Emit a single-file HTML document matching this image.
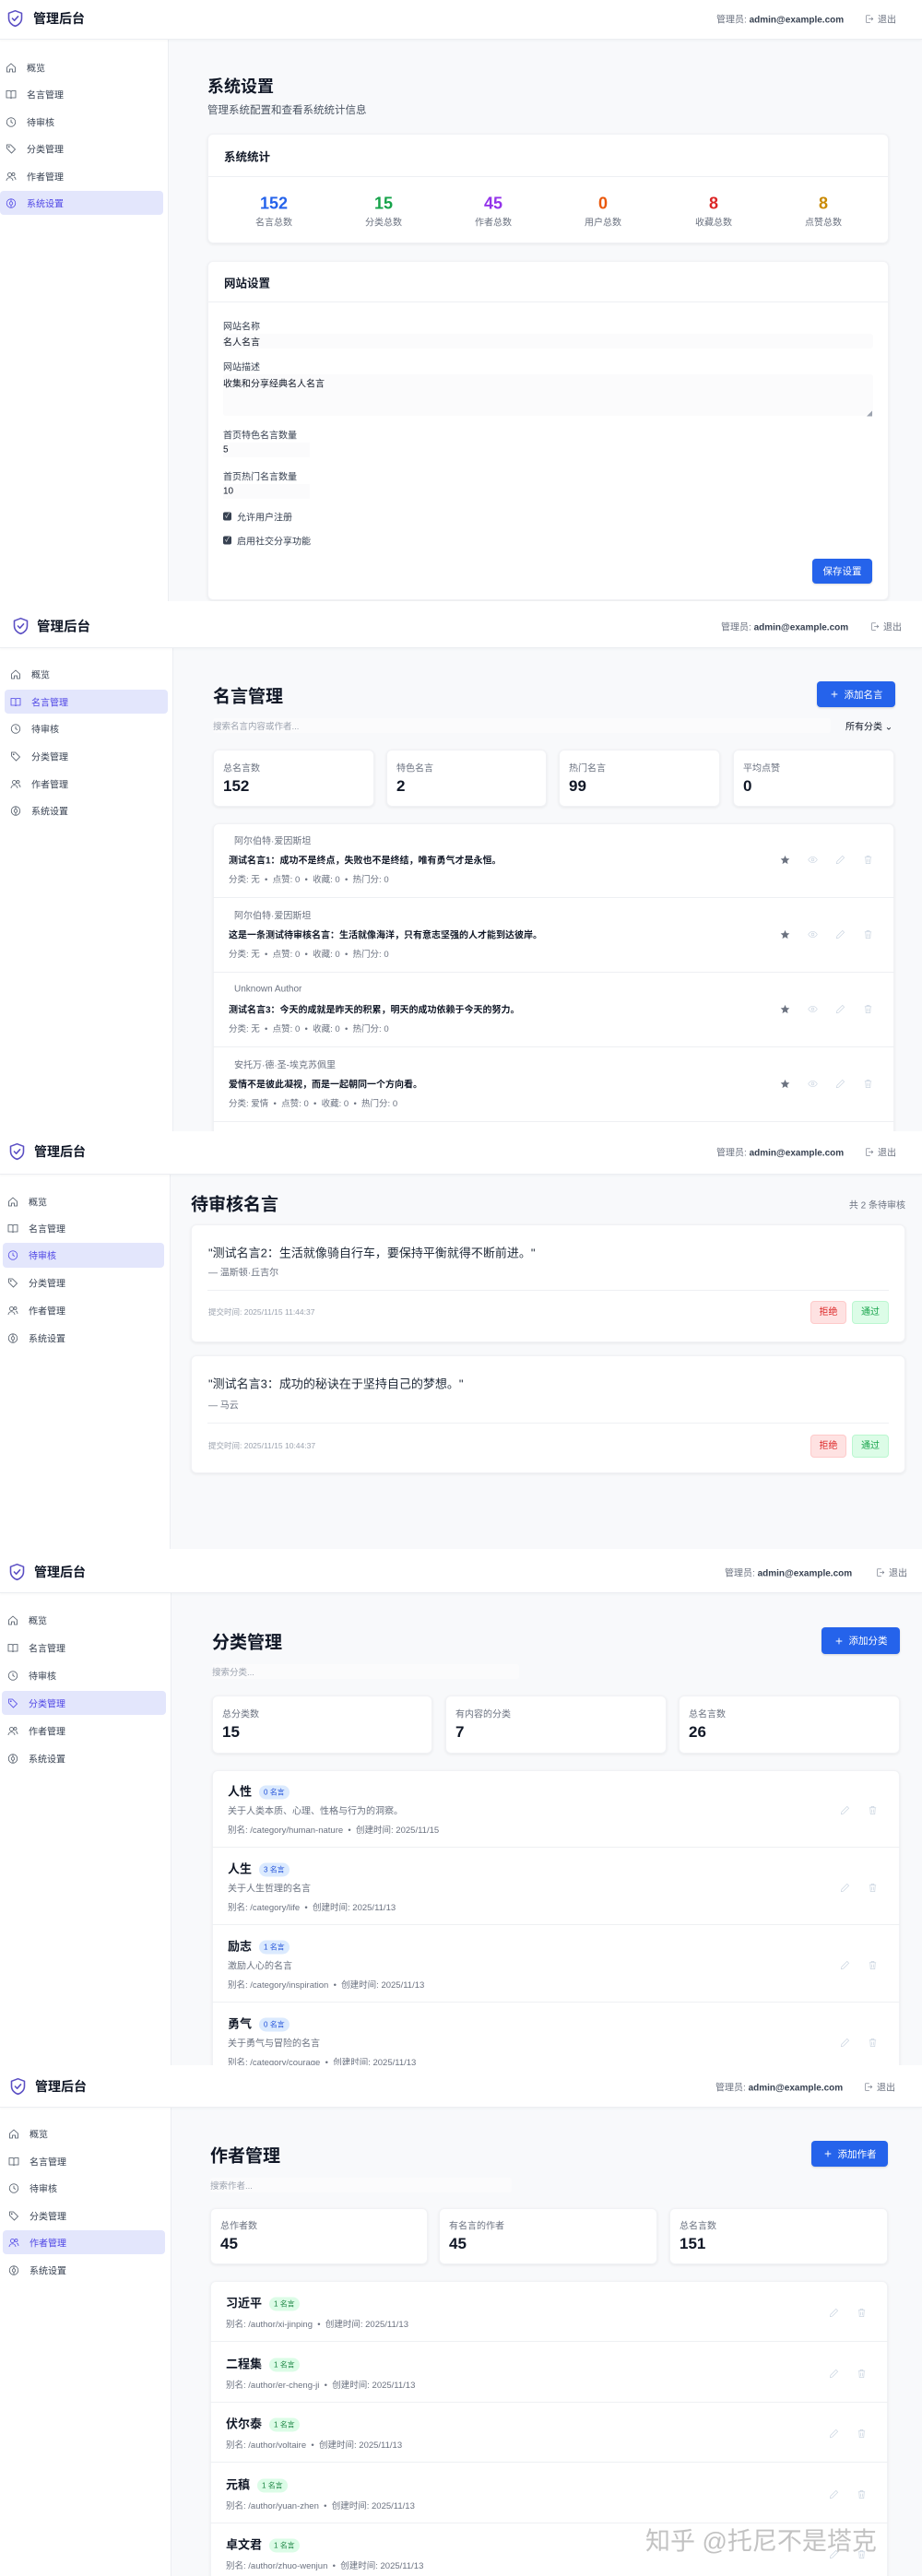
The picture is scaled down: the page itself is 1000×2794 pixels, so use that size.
<!DOCTYPE html>
<html><head><meta charset="utf-8">
<style>
*{box-sizing:border-box}
body{margin:0;width:1000px;height:2794px;position:relative;font-family:"Liberation Sans","Noto Sans CJK SC",sans-serif;background:#f8f9fb;color:#111827;overflow:hidden}
.p{position:absolute;left:0;width:1000px;overflow:hidden;background:#f8f9fb}
.a{position:absolute;white-space:nowrap}
.c{transform:translateY(-50%)}
.side{position:absolute;left:0;top:0;bottom:0;background:#fff;border-right:1px solid #eceef2}
.hdr{position:absolute;top:0;left:0;right:0;background:#fff;border-bottom:1px solid #eceef2;box-shadow:0 1px 3px rgba(0,0,0,.04)}
.logo{font-size:14px;font-weight:bold;color:#111827}
.nav{font-size:10px;color:#374151;display:flex;align-items:center}
.nav svg{width:12px;height:12px;margin-right:11px;stroke:#4b5563;fill:none;stroke-width:1.6}
.act{position:absolute;background:#e3e6fc;border-radius:4px}
.nav.on{color:#4f46e5}.nav.on svg{stroke:#4f46e5}
.usr{font-size:10px;color:#6b7280}.usr b{color:#374151;font-weight:600}
.out{font-size:10px;color:#6b7280;display:flex;align-items:center}
.out svg{width:10px;height:10px;stroke:#6b7280;fill:none;stroke-width:1.5;margin-right:4px}
.card{position:absolute;background:#fff;border-radius:6px;box-shadow:0 1px 3px rgba(0,0,0,.07);border:1px solid #f1f2f5}
.h1{font-size:19px;font-weight:bold;color:#111827}
.btn{position:absolute;background:#2563eb;color:#fff;border-radius:4px;font-size:10.5px;display:flex;align-items:center;justify-content:center;box-shadow:0 1px 2px rgba(0,0,0,.15)}
.srch{position:absolute;background:#fbfbfc;border-radius:3px;font-size:9.5px;color:#9ca3af;padding-left:0;display:flex;align-items:center}
.sl{font-size:10px;color:#6b7280}
.sv{font-size:17px;font-weight:bold;color:#111827}
.g{color:#6b7280}
.ln{position:absolute;height:1px;background:#eef0f3}
.ic{position:absolute;width:11px;height:11px;fill:none;stroke:#cbd5e1;stroke-width:1.5}
.badge{display:inline-block;font-size:8px;padding:2px 5px;border-radius:8px;margin-left:8px;vertical-align:middle;font-weight:normal}
.bb{background:#dbeafe;color:#1d4ed8}.bg{background:#dcfce7;color:#15803d}
</style></head><body>
<svg width="0" height="0" style="position:absolute">
<defs>
<symbol id="shield" viewBox="0 0 24 24"><path d="M12 2.5l8 3v6c0 5-3.5 8.6-8 10-4.5-1.4-8-5-8-10v-6z" fill="none" stroke="#5b4fc4" stroke-width="1.8" stroke-linejoin="round"/><path d="M8.5 12l2.5 2.5 4.5-5" fill="none" stroke="#5b4fc4" stroke-width="1.8" stroke-linecap="round" stroke-linejoin="round"/></symbol>
<symbol id="home" viewBox="0 0 24 24"><path d="M3 11l9-8 9 8v10h-6v-6h-6v6H3z"/></symbol>
<symbol id="book" viewBox="0 0 24 24"><path d="M2 4h7a3 3 0 013 3v14a2 2 0 00-2-2H2zM22 4h-7a3 3 0 00-3 3v14a2 2 0 012-2h8z"/></symbol>
<symbol id="clock" viewBox="0 0 24 24"><circle cx="12" cy="12" r="9.5"/><path d="M12 6.5V12l4 2"/></symbol>
<symbol id="tag" viewBox="0 0 24 24"><path d="M3 3h8l10 10-8 8L3 11z"/><circle cx="7.5" cy="7.5" r="1"/></symbol>
<symbol id="users" viewBox="0 0 24 24"><circle cx="9" cy="8" r="4"/><path d="M2 21c0-4 3-6.5 7-6.5s7 2.5 7 6.5"/><circle cx="17" cy="7" r="3"/><path d="M18 13c2.5.5 4 2.5 4 6"/></symbol>
<symbol id="gear" viewBox="0 0 24 24"><circle cx="12" cy="12" r="9.5"/><circle cx="12" cy="12" r="3.5"/><path d="M12 2.5v6M12 15.5v6"/></symbol>
<symbol id="logout" viewBox="0 0 24 24"><path d="M14 3H4v18h10M10 12h11M17 8l4 4-4 4"/></symbol>
<symbol id="star" viewBox="0 0 24 24"><path d="M12 2l3 7 7.5.6-5.7 5 1.8 7.4L12 18l-6.6 4 1.8-7.4-5.7-5L9 9z" fill="#6b7280" stroke="none"/></symbol>
<symbol id="eye" viewBox="0 0 24 24"><path d="M1.5 12S5.5 5 12 5s10.5 7 10.5 7-4 7-10.5 7S1.5 12 1.5 12z"/><circle cx="12" cy="12" r="3"/></symbol>
<symbol id="pen" viewBox="0 0 24 24"><path d="M17 3l4 4L8 20l-5 1 1-5z"/></symbol>
<symbol id="trash" viewBox="0 0 24 24"><path d="M4 6h16M9 6V3h6v3M6 6l1 15h10l1-15M10 10v8M14 10v8"/></symbol>
<symbol id="plus" viewBox="0 0 24 24"><path d="M12 4v16M4 12h16" stroke="#fff" stroke-width="2.2" fill="none"/></symbol>
</defs></svg>

<!-- ================= PANEL 1 ================= -->
<div class="p" style="top:0;height:652px">
 <div class="side" style="width:183px"></div>
 <div class="hdr" style="height:43px"></div>
 <svg class="a" style="left:6px;top:9px;width:21px;height:22px"><use href="#shield"/></svg>
 <div class="a c logo" style="left:36px;top:20px">管理后台</div>
 <div class="a c usr" style="left:777px;top:20px">管理员: <b>admin@example.com</b></div>
 <div class="a c out" style="left:938px;top:20px"><svg><use href="#logout"/></svg>退出</div>
 <div class="act" style="left:0;top:207px;width:177px;height:26px"></div>
 <div class="a c nav" style="left:6px;top:73px"><svg><use href="#home"/></svg>概览</div>
 <div class="a c nav" style="left:6px;top:102px"><svg><use href="#book"/></svg>名言管理</div>
 <div class="a c nav" style="left:6px;top:132px"><svg><use href="#clock"/></svg>待审核</div>
 <div class="a c nav" style="left:6px;top:161px"><svg><use href="#tag"/></svg>分类管理</div>
 <div class="a c nav" style="left:6px;top:191px"><svg><use href="#users"/></svg>作者管理</div>
 <div class="a c nav on" style="left:6px;top:220px"><svg><use href="#gear"/></svg>系统设置</div>

 <div class="a c" style="left:225px;top:93px;font-size:18px;font-weight:bold">系统设置</div>
 <div class="a c" style="left:225px;top:119px;font-size:11.5px;color:#4b5563">管理系统配置和查看系统统计信息</div>

 <div class="card" style="left:225px;top:145px;width:739px;height:119px">
  <div class="a c" style="left:17px;top:23px;font-size:12.5px;font-weight:600">系统统计</div>
  <div class="ln" style="left:0;right:0;top:45px"></div>
 </div>
 <div class="a c" style="left:247px;width:100px;text-align:center;top:221px;font-size:18px;font-weight:bold;color:#2563eb">152</div>
 <div class="a c" style="left:366px;width:100px;text-align:center;top:221px;font-size:18px;font-weight:bold;color:#16a34a">15</div>
 <div class="a c" style="left:485px;width:100px;text-align:center;top:221px;font-size:18px;font-weight:bold;color:#9333ea">45</div>
 <div class="a c" style="left:604px;width:100px;text-align:center;top:221px;font-size:18px;font-weight:bold;color:#ea580c">0</div>
 <div class="a c" style="left:724px;width:100px;text-align:center;top:221px;font-size:18px;font-weight:bold;color:#dc2626">8</div>
 <div class="a c" style="left:843px;width:100px;text-align:center;top:221px;font-size:18px;font-weight:bold;color:#ca8a04">8</div>
 <div class="a c sl" style="left:247px;width:100px;text-align:center;top:240px">名言总数</div>
 <div class="a c sl" style="left:366px;width:100px;text-align:center;top:240px">分类总数</div>
 <div class="a c sl" style="left:485px;width:100px;text-align:center;top:240px">作者总数</div>
 <div class="a c sl" style="left:604px;width:100px;text-align:center;top:240px">用户总数</div>
 <div class="a c sl" style="left:724px;width:100px;text-align:center;top:240px">收藏总数</div>
 <div class="a c sl" style="left:843px;width:100px;text-align:center;top:240px">点赞总数</div>

 <div class="card" style="left:225px;top:283px;width:739px;height:368px">
  <div class="a c" style="left:17px;top:22px;font-size:12.5px;font-weight:600">网站设置</div>
  <div class="ln" style="left:0;right:0;top:43px"></div>
 </div>
 <div class="a" style="left:242px;top:362px;width:705px;height:16px;background:#fbfbfc;border-radius:3px"></div>
 <div class="a" style="left:242px;top:406px;width:705px;height:45px;background:#fbfbfc;border-radius:3px"></div>
 <div class="a" style="left:242px;top:480px;width:94px;height:16px;background:#fbfbfc"></div>
 <div class="a" style="left:242px;top:525px;width:94px;height:16px;background:#fbfbfc"></div>
 <div class="a" style="left:940px;top:444px;font-size:6px;color:#9ca3af">◢</div>
 <div class="a c" style="left:242px;top:353px;font-size:10px;color:#374151">网站名称</div>
 <div class="a c" style="left:242px;top:370px;font-size:10px;color:#111827">名人名言</div>
 <div class="a c" style="left:242px;top:397px;font-size:10px;color:#374151">网站描述</div>
 <div class="a c" style="left:242px;top:415px;font-size:10px;color:#111827">收集和分享经典名人名言</div>
 <div class="a c" style="left:242px;top:471px;font-size:10px;color:#374151">首页特色名言数量</div>
 <div class="a c" style="left:242px;top:488px;font-size:10px;color:#111827">5</div>
 <div class="a c" style="left:242px;top:516px;font-size:10px;color:#374151">首页热门名言数量</div>
 <div class="a c" style="left:242px;top:533px;font-size:10px;color:#111827">10</div>
 <div class="a c" style="left:242px;top:560px;font-size:10px;color:#374151;display:flex;align-items:center"><span style="display:inline-block;width:9px;height:9px;background:#374151;border-radius:2px;margin-right:6px;color:#fff;font-size:7px;line-height:9px;text-align:center">✓</span>允许用户注册</div>
 <div class="a c" style="left:242px;top:586px;font-size:10px;color:#374151;display:flex;align-items:center"><span style="display:inline-block;width:9px;height:9px;background:#374151;border-radius:2px;margin-right:6px;color:#fff;font-size:7px;line-height:9px;text-align:center">✓</span>启用社交分享功能</div>
 <div class="btn" style="left:881px;top:606px;width:65px;height:27px">保存设置</div>
</div>

<!-- ================= PANEL 2 ================= -->
<div class="p" style="top:652px;height:575px">
 <div class="side" style="width:188px"></div>
 <div class="hdr" style="height:51px"></div>
 <svg class="a" style="left:12px;top:16px;width:21px;height:22px"><use href="#shield"/></svg>
 <div class="a c logo" style="left:40px;top:27px;font-size:14.5px">管理后台</div>
 <div class="a c usr" style="left:782px;top:27px">管理员: <b>admin@example.com</b></div>
 <div class="a c out" style="left:944px;top:27px"><svg><use href="#logout"/></svg>退出</div>
 <div class="act" style="left:5px;top:96px;width:177px;height:26px"></div>
 <div class="a c nav" style="left:11px;top:79px"><svg><use href="#home"/></svg>概览</div>
 <div class="a c nav on" style="left:11px;top:109px"><svg><use href="#book"/></svg>名言管理</div>
 <div class="a c nav" style="left:11px;top:138px"><svg><use href="#clock"/></svg>待审核</div>
 <div class="a c nav" style="left:11px;top:168px"><svg><use href="#tag"/></svg>分类管理</div>
 <div class="a c nav" style="left:11px;top:198px"><svg><use href="#users"/></svg>作者管理</div>
 <div class="a c nav" style="left:11px;top:227px"><svg><use href="#gear"/></svg>系统设置</div>

 <div class="a c h1" style="left:231px;top:102px">名言管理</div>
 <div class="btn" style="left:886px;top:87px;width:85px;height:28px"><svg style="width:10px;height:10px;margin-right:6px"><use href="#plus"/></svg>添加名言</div>
 <div class="srch" style="left:231px;top:127px;width:670px;height:16px">搜索名言内容或作者...</div>
 <div class="a c" style="left:917px;top:135px;font-size:10px;color:#111827">所有分类 ⌄</div>

 <div class="card" style="left:231px;top:161px;width:175px;height:62px"></div>
 <div class="card" style="left:419px;top:161px;width:174px;height:62px"></div>
 <div class="card" style="left:606px;top:161px;width:175px;height:62px"></div>
 <div class="card" style="left:795px;top:161px;width:175px;height:62px"></div>
 <div class="a c sl" style="left:242px;top:180px">总名言数</div><div class="a c sv" style="left:242px;top:201px">152</div>
 <div class="a c sl" style="left:430px;top:180px">特色名言</div><div class="a c sv" style="left:430px;top:201px">2</div>
 <div class="a c sl" style="left:617px;top:180px">热门名言</div><div class="a c sv" style="left:617px;top:201px">99</div>
 <div class="a c sl" style="left:806px;top:180px">平均点赞</div><div class="a c sv" style="left:806px;top:201px">0</div>

 <div class="card" style="left:231px;top:241px;width:739px;height:360px"></div>
 <!-- item 1 -->
 <div class="a c g" style="left:254px;top:259px;font-size:10px">阿尔伯特·爱因斯坦</div>
 <div class="a c" style="left:248px;top:280px;font-size:10px;font-weight:bold">测试名言1：成功不是终点，失败也不是终结，唯有勇气才是永恒。</div>
 <div class="a c g" style="left:248px;top:301px;font-size:9.5px">分类: 无 &nbsp;•&nbsp; 点赞: 0 &nbsp;•&nbsp; 收藏: 0 &nbsp;•&nbsp; 热门分: 0</div>
 <div class="ln" style="left:231px;width:739px;top:321px"></div>
 <!-- item 2 -->
 <div class="a c g" style="left:254px;top:340px;font-size:10px">阿尔伯特·爱因斯坦</div>
 <div class="a c" style="left:248px;top:361px;font-size:10px;font-weight:bold">这是一条测试待审核名言：生活就像海洋，只有意志坚强的人才能到达彼岸。</div>
 <div class="a c g" style="left:248px;top:382px;font-size:9.5px">分类: 无 &nbsp;•&nbsp; 点赞: 0 &nbsp;•&nbsp; 收藏: 0 &nbsp;•&nbsp; 热门分: 0</div>
 <div class="ln" style="left:231px;width:739px;top:402px"></div>
 <!-- item 3 -->
 <div class="a c g" style="left:254px;top:421px;font-size:10px">Unknown Author</div>
 <div class="a c" style="left:248px;top:442px;font-size:10px;font-weight:bold">测试名言3：今天的成就是昨天的积累，明天的成功依赖于今天的努力。</div>
 <div class="a c g" style="left:248px;top:463px;font-size:9.5px">分类: 无 &nbsp;•&nbsp; 点赞: 0 &nbsp;•&nbsp; 收藏: 0 &nbsp;•&nbsp; 热门分: 0</div>
 <div class="ln" style="left:231px;width:739px;top:483px"></div>
 <!-- item 4 -->
 <div class="a c g" style="left:254px;top:502px;font-size:10px">安托万·德·圣-埃克苏佩里</div>
 <div class="a c" style="left:248px;top:523px;font-size:10px;font-weight:bold">爱情不是彼此凝视，而是一起朝同一个方向看。</div>
 <div class="a c g" style="left:248px;top:544px;font-size:9.5px">分类: 爱情 &nbsp;•&nbsp; 点赞: 0 &nbsp;•&nbsp; 收藏: 0 &nbsp;•&nbsp; 热门分: 0</div>
 <div class="ln" style="left:231px;width:739px;top:564px"></div>
 <!-- icons -->
 <svg class="ic" style="left:846px;top:275px"><use href="#star"/></svg><svg class="ic" style="left:876px;top:275px"><use href="#eye"/></svg><svg class="ic" style="left:906px;top:275px"><use href="#pen"/></svg><svg class="ic" style="left:936px;top:275px"><use href="#trash"/></svg>
 <svg class="ic" style="left:846px;top:356px"><use href="#star"/></svg><svg class="ic" style="left:876px;top:356px"><use href="#eye"/></svg><svg class="ic" style="left:906px;top:356px"><use href="#pen"/></svg><svg class="ic" style="left:936px;top:356px"><use href="#trash"/></svg>
 <svg class="ic" style="left:846px;top:437px"><use href="#star"/></svg><svg class="ic" style="left:876px;top:437px"><use href="#eye"/></svg><svg class="ic" style="left:906px;top:437px"><use href="#pen"/></svg><svg class="ic" style="left:936px;top:437px"><use href="#trash"/></svg>
 <svg class="ic" style="left:846px;top:518px"><use href="#star"/></svg><svg class="ic" style="left:876px;top:518px"><use href="#eye"/></svg><svg class="ic" style="left:906px;top:518px"><use href="#pen"/></svg><svg class="ic" style="left:936px;top:518px"><use href="#trash"/></svg>
</div>

<!-- ================= PANEL 3 ================= -->
<div class="p" style="top:1227px;height:453px">
 <div class="side" style="width:185px"></div>
 <div class="hdr" style="height:47px"></div>
 <svg class="a" style="left:8px;top:11px;width:21px;height:22px"><use href="#shield"/></svg>
 <div class="a c logo" style="left:37px;top:22px">管理后台</div>
 <div class="a c usr" style="left:777px;top:22px">管理员: <b>admin@example.com</b></div>
 <div class="a c out" style="left:938px;top:22px"><svg><use href="#logout"/></svg>退出</div>
 <div class="act" style="left:3px;top:121px;width:175px;height:27px"></div>
 <div class="a c nav" style="left:8px;top:76px"><svg><use href="#home"/></svg>概览</div>
 <div class="a c nav" style="left:8px;top:105px"><svg><use href="#book"/></svg>名言管理</div>
 <div class="a c nav on" style="left:8px;top:134px"><svg><use href="#clock"/></svg>待审核</div>
 <div class="a c nav" style="left:8px;top:164px"><svg><use href="#tag"/></svg>分类管理</div>
 <div class="a c nav" style="left:8px;top:194px"><svg><use href="#users"/></svg>作者管理</div>
 <div class="a c nav" style="left:8px;top:224px"><svg><use href="#gear"/></svg>系统设置</div>

 <div class="a c h1" style="left:207px;top:78px">待审核名言</div>
 <div class="a c" style="right:18px;top:79px;font-size:10px;color:#6b7280">共 2 条待审核</div>

 <div class="card" style="left:207px;top:101px;width:775px;height:128px"></div>
 <div class="a c" style="left:226px;top:131px;font-size:13px;color:#1f2937">"测试名言2：生活就像骑自行车，要保持平衡就得不断前进。"</div>
 <div class="a c" style="left:226px;top:152px;font-size:10px;color:#6b7280">— 温斯顿·丘吉尔</div>
 <div class="ln" style="left:225px;width:739px;top:172px"></div>
 <div class="a c" style="left:226px;top:196px;font-size:8.5px;color:#9ca3af">提交时间: 2025/11/15 11:44:37</div>
 <div class="a" style="left:879px;top:184px;width:39px;height:25px;background:#fee2e2;border:1px solid #fecaca;border-radius:4px;color:#dc2626;font-size:10px;text-align:center;line-height:23px">拒绝</div>
 <div class="a" style="left:924px;top:184px;width:40px;height:25px;background:#dcfce7;border:1px solid #bbf7d0;border-radius:4px;color:#16a34a;font-size:10px;text-align:center;line-height:23px">通过</div>

 <div class="card" style="left:207px;top:243px;width:775px;height:128px"></div>
 <div class="a c" style="left:226px;top:273px;font-size:13px;color:#1f2937">"测试名言3：成功的秘诀在于坚持自己的梦想。"</div>
 <div class="a c" style="left:226px;top:296px;font-size:10px;color:#6b7280">— 马云</div>
 <div class="ln" style="left:225px;width:739px;top:316px"></div>
 <div class="a c" style="left:226px;top:341px;font-size:8.5px;color:#9ca3af">提交时间: 2025/11/15 10:44:37</div>
 <div class="a" style="left:879px;top:329px;width:39px;height:25px;background:#fee2e2;border:1px solid #fecaca;border-radius:4px;color:#dc2626;font-size:10px;text-align:center;line-height:23px">拒绝</div>
 <div class="a" style="left:924px;top:329px;width:40px;height:25px;background:#dcfce7;border:1px solid #bbf7d0;border-radius:4px;color:#16a34a;font-size:10px;text-align:center;line-height:23px">通过</div>
</div>

<!-- ================= PANEL 4 ================= -->
<div class="p" style="top:1680px;height:560px">
 <div class="side" style="width:186px"></div>
 <div class="hdr" style="height:48px"></div>
 <svg class="a" style="left:8px;top:14px;width:21px;height:22px"><use href="#shield"/></svg>
 <div class="a c logo" style="left:37px;top:25px">管理后台</div>
 <div class="a c usr" style="left:786px;top:25px">管理员: <b>admin@example.com</b></div>
 <div class="a c out" style="left:950px;top:25px"><svg><use href="#logout"/></svg>退出</div>
 <div class="act" style="left:2px;top:154px;width:178px;height:26px"></div>
 <div class="a c nav" style="left:8px;top:77px"><svg><use href="#home"/></svg>概览</div>
 <div class="a c nav" style="left:8px;top:107px"><svg><use href="#book"/></svg>名言管理</div>
 <div class="a c nav" style="left:8px;top:137px"><svg><use href="#clock"/></svg>待审核</div>
 <div class="a c nav on" style="left:8px;top:167px"><svg><use href="#tag"/></svg>分类管理</div>
 <div class="a c nav" style="left:8px;top:197px"><svg><use href="#users"/></svg>作者管理</div>
 <div class="a c nav" style="left:8px;top:227px"><svg><use href="#gear"/></svg>系统设置</div>

 <div class="a c h1" style="left:230px;top:100px">分类管理</div>
 <div class="btn" style="left:891px;top:85px;width:85px;height:29px"><svg style="width:10px;height:10px;margin-right:6px"><use href="#plus"/></svg>添加分类</div>
 <div class="srch" style="left:230px;top:125px;width:333px;height:16px">搜索分类...</div>

 <div class="card" style="left:230px;top:159px;width:239px;height:63px"></div>
 <div class="card" style="left:483px;top:159px;width:240px;height:63px"></div>
 <div class="card" style="left:736px;top:159px;width:240px;height:63px"></div>
 <div class="a c sl" style="left:241px;top:178px">总分类数</div><div class="a c sv" style="left:241px;top:199px">15</div>
 <div class="a c sl" style="left:494px;top:178px">有内容的分类</div><div class="a c sv" style="left:494px;top:199px">7</div>
 <div class="a c sl" style="left:747px;top:178px">总名言数</div><div class="a c sv" style="left:747px;top:199px">26</div>

 <div class="card" style="left:230px;top:240px;width:746px;height:340px"></div>
 <div class="a c" style="left:247px;top:262px;font-size:13px;font-weight:600">人性<span class="badge bb">0 名言</span></div>
 <div class="a c g" style="left:247px;top:283px;font-size:10px">关于人类本质、心理、性格与行为的洞察。</div>
 <div class="a c g" style="left:247px;top:304px;font-size:9.5px">别名: /category/human-nature &nbsp;•&nbsp; 创建时间: 2025/11/15</div>
 <div class="ln" style="left:230px;width:746px;top:323px"></div>
 <div class="a c" style="left:247px;top:346px;font-size:13px;font-weight:600">人生<span class="badge bb">3 名言</span></div>
 <div class="a c g" style="left:247px;top:367px;font-size:10px">关于人生哲理的名言</div>
 <div class="a c g" style="left:247px;top:388px;font-size:9.5px">别名: /category/life &nbsp;•&nbsp; 创建时间: 2025/11/13</div>
 <div class="ln" style="left:230px;width:746px;top:407px"></div>
 <div class="a c" style="left:247px;top:430px;font-size:13px;font-weight:600">励志<span class="badge bb">1 名言</span></div>
 <div class="a c g" style="left:247px;top:451px;font-size:10px">激励人心的名言</div>
 <div class="a c g" style="left:247px;top:472px;font-size:9.5px">别名: /category/inspiration &nbsp;•&nbsp; 创建时间: 2025/11/13</div>
 <div class="ln" style="left:230px;width:746px;top:491px"></div>
 <div class="a c" style="left:247px;top:514px;font-size:13px;font-weight:600">勇气<span class="badge bb">0 名言</span></div>
 <div class="a c g" style="left:247px;top:535px;font-size:10px">关于勇气与冒险的名言</div>
 <div class="a c g" style="left:247px;top:556px;font-size:9.5px">别名: /category/courage &nbsp;•&nbsp; 创建时间: 2025/11/13</div>
 <svg class="ic" style="left:911px;top:278px"><use href="#pen"/></svg><svg class="ic" style="left:941px;top:278px"><use href="#trash"/></svg>
 <svg class="ic" style="left:911px;top:362px"><use href="#pen"/></svg><svg class="ic" style="left:941px;top:362px"><use href="#trash"/></svg>
 <svg class="ic" style="left:911px;top:446px"><use href="#pen"/></svg><svg class="ic" style="left:941px;top:446px"><use href="#trash"/></svg>
 <svg class="ic" style="left:911px;top:530px"><use href="#pen"/></svg><svg class="ic" style="left:941px;top:530px"><use href="#trash"/></svg>
</div>

<!-- ================= PANEL 5 ================= -->
<div class="p" style="top:2240px;height:554px">
 <div class="side" style="width:186px"></div>
 <div class="hdr" style="height:46px"></div>
 <svg class="a" style="left:9px;top:12px;width:21px;height:22px"><use href="#shield"/></svg>
 <div class="a c logo" style="left:38px;top:23px">管理后台</div>
 <div class="a c usr" style="left:776px;top:23px">管理员: <b>admin@example.com</b></div>
 <div class="a c out" style="left:937px;top:23px"><svg><use href="#logout"/></svg>退出</div>
 <div class="act" style="left:3px;top:179px;width:176px;height:26px"></div>
 <div class="a c nav" style="left:9px;top:74px"><svg><use href="#home"/></svg>概览</div>
 <div class="a c nav" style="left:9px;top:104px"><svg><use href="#book"/></svg>名言管理</div>
 <div class="a c nav" style="left:9px;top:133px"><svg><use href="#clock"/></svg>待审核</div>
 <div class="a c nav" style="left:9px;top:163px"><svg><use href="#tag"/></svg>分类管理</div>
 <div class="a c nav on" style="left:9px;top:192px"><svg><use href="#users"/></svg>作者管理</div>
 <div class="a c nav" style="left:9px;top:222px"><svg><use href="#gear"/></svg>系统设置</div>

 <div class="a c h1" style="left:228px;top:97px">作者管理</div>
 <div class="btn" style="left:880px;top:82px;width:83px;height:28px"><svg style="width:10px;height:10px;margin-right:6px"><use href="#plus"/></svg>添加作者</div>
 <div class="srch" style="left:228px;top:122px;width:327px;height:16px">搜索作者...</div>

 <div class="card" style="left:228px;top:155px;width:236px;height:61px"></div>
 <div class="card" style="left:476px;top:155px;width:237px;height:61px"></div>
 <div class="card" style="left:726px;top:155px;width:237px;height:61px"></div>
 <div class="a c sl" style="left:239px;top:173px">总作者数</div><div class="a c sv" style="left:239px;top:194px">45</div>
 <div class="a c sl" style="left:487px;top:173px">有名言的作者</div><div class="a c sv" style="left:487px;top:194px">45</div>
 <div class="a c sl" style="left:737px;top:173px">总名言数</div><div class="a c sv" style="left:737px;top:194px">151</div>

 <div class="card" style="left:228px;top:234px;width:735px;height:340px"></div>
 <div class="a c" style="left:245px;top:257px;font-size:13px;font-weight:600">习近平<span class="badge bg">1 名言</span></div>
 <div class="a c g" style="left:245px;top:280px;font-size:9.5px">别名: /author/xi-jinping &nbsp;•&nbsp; 创建时间: 2025/11/13</div>
 <div class="ln" style="left:228px;width:735px;top:299px"></div>
 <div class="a c" style="left:245px;top:323px;font-size:13px;font-weight:600">二程集<span class="badge bg">1 名言</span></div>
 <div class="a c g" style="left:245px;top:346px;font-size:9.5px">别名: /author/er-cheng-ji &nbsp;•&nbsp; 创建时间: 2025/11/13</div>
 <div class="ln" style="left:228px;width:735px;top:365px"></div>
 <div class="a c" style="left:245px;top:388px;font-size:13px;font-weight:600">伏尔泰<span class="badge bg">1 名言</span></div>
 <div class="a c g" style="left:245px;top:411px;font-size:9.5px">别名: /author/voltaire &nbsp;•&nbsp; 创建时间: 2025/11/13</div>
 <div class="ln" style="left:228px;width:735px;top:430px"></div>
 <div class="a c" style="left:245px;top:454px;font-size:13px;font-weight:600">元稹<span class="badge bg">1 名言</span></div>
 <div class="a c g" style="left:245px;top:477px;font-size:9.5px">别名: /author/yuan-zhen &nbsp;•&nbsp; 创建时间: 2025/11/13</div>
 <div class="ln" style="left:228px;width:735px;top:496px"></div>
 <div class="a c" style="left:245px;top:519px;font-size:13px;font-weight:600">卓文君<span class="badge bg">1 名言</span></div>
 <div class="a c g" style="left:245px;top:542px;font-size:9.5px">别名: /author/zhuo-wenjun &nbsp;•&nbsp; 创建时间: 2025/11/13</div>
 <svg class="ic" style="left:899px;top:263px"><use href="#pen"/></svg><svg class="ic" style="left:929px;top:263px"><use href="#trash"/></svg>
 <svg class="ic" style="left:899px;top:329px"><use href="#pen"/></svg><svg class="ic" style="left:929px;top:329px"><use href="#trash"/></svg>
 <svg class="ic" style="left:899px;top:394px"><use href="#pen"/></svg><svg class="ic" style="left:929px;top:394px"><use href="#trash"/></svg>
 <svg class="ic" style="left:899px;top:460px"><use href="#pen"/></svg><svg class="ic" style="left:929px;top:460px"><use href="#trash"/></svg>
 <svg class="ic" style="left:899px;top:525px"><use href="#pen"/></svg><svg class="ic" style="left:929px;top:525px"><use href="#trash"/></svg>
 <div class="a c" style="left:700px;top:514px;font-size:27px;color:rgba(120,120,120,.45)">知乎 @托尼不是塔克</div>
</div>
</body></html>
